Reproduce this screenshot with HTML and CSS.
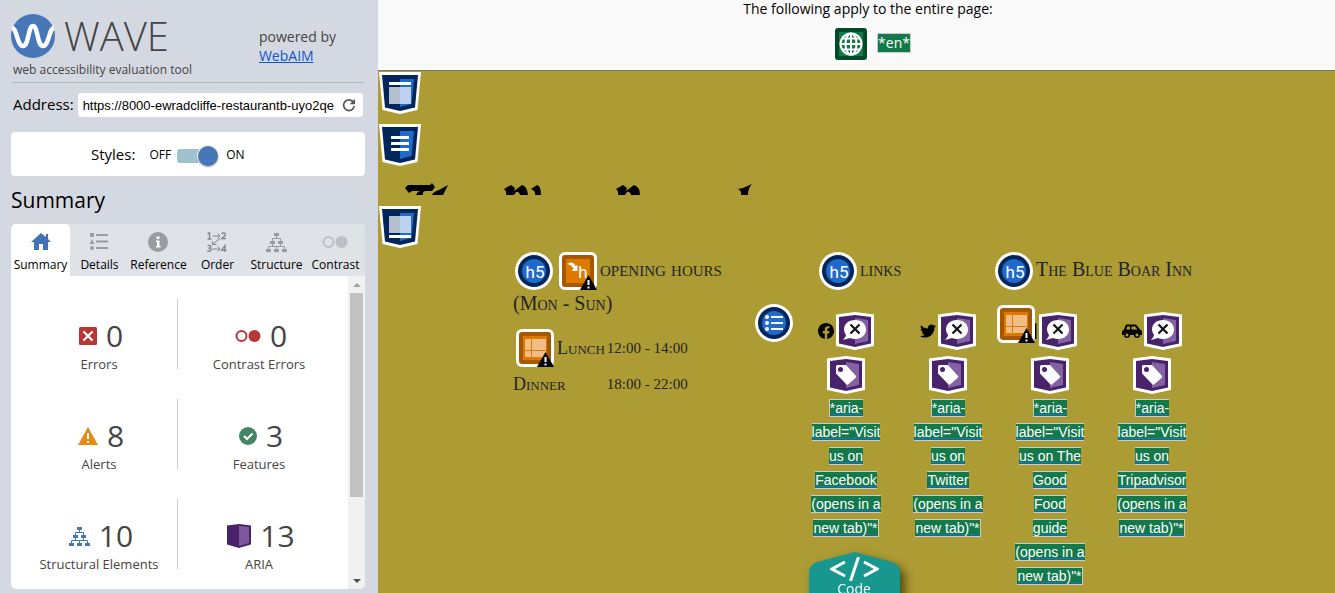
FILE: index.html
```html
<!DOCTYPE html>
<html lang="en">
<head>
<meta charset="utf-8">
<title>WAVE Report</title>
<link rel="stylesheet" href="styles.css">
</head>
<body>
<svg class="defs" aria-hidden="true">
  <symbol id="tree" viewBox="0 0 21 19">
    <path d="M8 0h5v3h-5zM4 8h5v3H4zM12 8h5v3h-5zM0 16h5v3H0zM8 16h5v3H8zM16 16h5v3h-5z"/>
    <path d="M10.500 3v3M6.500 8V5.500h8V8M6.500 11v2.500M14.500 11v2.500M2.500 16v-2.500h16V16M10.500 13.500V16" fill="none" stroke="currentColor"/>
  </symbol>
  <symbol id="shield" viewBox="0 0 42 42">
    <path fill="#fff" d="M0 0h42l-3.500 38L21 42 3.500 38z"/>
    <path fill="#00265a" d="M3 3h36l-3 32.500-15 3.500-15-3.500z"/>
    <path fill="#2269cc" d="M21 7h14l-2.500 25L21 35z"/>
  </symbol>
  <symbol id="ring" viewBox="0 0 38 38">
    <circle cx="19" cy="19" r="19" fill="#fff"/><circle cx="19" cy="19" r="16" fill="#00265a"/><circle cx="19" cy="19" r="12" fill="#2269cc"/>
  </symbol>
  <symbol id="amber" viewBox="0 0 38 38">
    <rect width="38" height="38" rx="6" fill="#fff"/><rect x="3" y="3" width="32" height="32" rx="3" fill="#a65800"/><path fill="#dd7800" d="M7 7h24v24H7z"/>
  </symbol>
  <symbol id="warn" viewBox="0 0 38 38">
    <path d="M29.500 23 38 38H21z" fill="#000"/><path fill="#fff" d="M28.500 28h2v5h-2zM28.500 34.500h2v2h-2z"/>
  </symbol>
  <symbol id="table" viewBox="0 0 38 38">
    <use href="#amber"/><path fill="#f0bd86" d="M9 10h6v11H9zM16 10h14v11H16zM9 22h6v6H9zM16 22h14v6H16z"/><use href="#warn"/>
  </symbol>
  <symbol id="aria" viewBox="0 0 38 38">
    <path fill="#fff" d="M0 2.500 19 0l19 2.500V34l-19 4-19-4z"/><path fill="#48236b" d="M3 5 19 3l16 2v26.500L19 35 3 31.500z"/><path fill="#8361a2" d="m19 6 13 2v21l-13 3z"/>
  </symbol>
  <symbol id="hidden" viewBox="0 0 38 38">
    <use href="#aria"/><path fill="#fff" d="M19 8c6.500 0 11 4 11 9.500S25.500 27 19 27q-3 0-5-1l-7 2q3-3 3-5-2-2.500-2-5.500C8 12 12.500 8 19 8z"/><path d="m14.500 12.500 9 9m0-9-9 9" stroke="#111" stroke-width="2.200"/>
  </symbol>
  <symbol id="label" viewBox="0 0 38 38">
    <use href="#aria"/><path fill="#fff" d="M10.500 9h8.500l10 11q.8 1-.5 2L21 28.500q-1 .8-2-.5L9 17.500v-7Q9 9 10.500 9z"/><circle cx="13.500" cy="13.500" r="2.500" fill="#48236b"/>
  </symbol>
</svg>

<aside class="sidebar">
  <header class="brand">
    <div>
      <div class="logo">
        <svg width="44" height="44" viewBox="0 0 44 44" aria-hidden="true"><circle cx="22" cy="22" r="22" fill="#4877b8"/><path d="M1 14c5 0 5 18 11 18s5-20 10-20 4 20 10 20 6-18 11-18" fill="none" stroke="#fff" stroke-width="4.500"/></svg>
        <h1>WAVE</h1>
      </div>
      <p class="tagline">web accessibility evaluation tool</p>
    </div>
    <p class="powered">powered by<br><a href="#">WebAIM</a></p>
  </header>
  <form class="address">
    <label for="url">Address:</label>
    <div class="url-box">
      <input id="url" type="text" value="https://8000-ewradcliffe-restaurantb-uyo2qe">
      <button type="button" aria-label="Reload"><svg width="14" height="14" viewBox="0 0 14 14"><path d="M11.500 4.500A5.300 5.300 0 1 0 12.200 8" fill="none" stroke="#555" stroke-width="1.700"/><path d="M13 .8v5.400H7.700z" fill="#555"/></svg></button>
    </div>
  </form>
  <div class="styles-box">
    <span class="styles-title">Styles:</span>
    <label for="styles">OFF</label><input id="styles" class="switch" type="checkbox" role="switch" checked><label for="styles">ON</label>
  </div>
  <h2>Summary</h2>
  <section class="panel">
    <nav class="tabs">
      <button class="active"><svg width="20" height="18" viewBox="0 0 20 18" fill="#4272b4"><path d="M10 0 0 9h3v8h5v-6h4v6h5V9h3l-3-3V1h-2v3z"/></svg>Summary</button>
      <button><svg width="20" height="18" viewBox="0 0 20 18" fill="#9a9c9f"><path d="M1 0h4v4H1zM3 6l2.500 5h-5zM7 1h12v2H7zM7 7.500h12v2H7zM7 14h12v2H7z"/><circle cx="3" cy="15" r="2"/></svg>Details</button>
      <button><svg width="20" height="20" viewBox="0 0 20 20"><circle cx="10" cy="10" r="10" fill="#9a9c9f"/><path fill="#fff" d="M8.500 4.500h3v2.500h-3zM8 8.500h3.500V14h1v1.500H8V14h1v-4H8z"/></svg>Reference</button>
      <button><svg width="20" height="20" viewBox="0 0 20 20" fill="none" stroke="#85878a"><path stroke-width="1.400" d="M.5 2 2.500.8V7M.5 7h4M14.500 2q1-1.500 2.500-1t1.500 2L14.800 6.500H19M.5 13.800q3-1 3.300.5T1.500 16.300q3 0 2.500 1.700t-3.700 1M18 20v-6.500l-3.500 4.700H19.500"/><path d="M5.500 4h7M10.500 1.500 13 4l-2.500 2.500M5.500 17h7M10.500 14.500 13 17l-2.500 2.500M13 6.500 6 12M5.500 9v3.500h4"/></svg>Order</button>
      <button><svg class="grey" width="21" height="19"><use href="#tree"/></svg>Structure</button>
      <button><svg width="26" height="14" viewBox="0 0 26 14"><circle cx="6.500" cy="7" r="5" fill="none" stroke="#bcc0c5" stroke-width="2"/><circle cx="19.500" cy="7" r="6" fill="#bcc0c5"/></svg>Contrast</button>
    </nav>
    <div class="results">
      <ul class="stats">
        <li><div class="count"><svg width="18" height="18" viewBox="0 0 18 18"><rect width="18" height="18" rx="1.500" fill="#b93636"/><path d="m4.500 4.500 9 9m0-9-9 9" stroke="#fff" stroke-width="2.200"/></svg>0</div>Errors</li>
        <li><div class="count"><svg width="26" height="14" viewBox="0 0 26 14"><circle cx="6.500" cy="7" r="5" fill="none" stroke="#b93636" stroke-width="2"/><circle cx="19.500" cy="7" r="6" fill="#b93636"/></svg>0</div>Contrast Errors</li>
        <li><div class="count"><svg width="20" height="18" viewBox="0 0 20 18"><path fill="#e38b16" d="m10 0 10 18H0z"/><path fill="#fff" d="M9 6h2v6H9zM9 14h2v2H9z"/></svg>8</div>Alerts</li>
        <li><div class="count"><svg width="18" height="18" viewBox="0 0 18 18"><circle cx="9" cy="9" r="9" fill="#458465"/><path d="m5 9 3 3 5.500-5.500" fill="none" stroke="#fff" stroke-width="2"/></svg>3</div>Features</li>
        <li><div class="count"><svg class="blue" width="21" height="19"><use href="#tree"/></svg>10</div>Structural Elements</li>
        <li><div class="count"><svg width="24" height="24" viewBox="0 0 24 24"><path fill="#48236b" d="m0 1.500 12-1.500 12 1.500v19L12 24 0 20.500z"/><path fill="#7c599c" d="m12 2 10 1v16l-10 3z"/></svg>13</div>ARIA</li>
      </ul>
      <div class="scrollbar" aria-hidden="true"><span class="arrow up"></span><span class="thumb"></span><span class="arrow down"></span></div>
    </div>
  </section>
</aside>

<main class="page">
  <header class="banner">
    <p>The following apply to the entire page:</p>
    <div class="lang">
      <svg width="38" height="38" viewBox="0 0 38 38"><rect width="38" height="38" rx="6" fill="#fff"/><rect x="3" y="3" width="32" height="32" rx="3" fill="#004c26"/><path fill="#14794a" d="M7 7h24v24H7z"/><g fill="none" stroke="#fff" stroke-width="2"><circle cx="19" cy="19" r="10.500"/><ellipse cx="19" cy="19" rx="5.500" ry="10.500"/><path d="M19 8.500v21M8.500 19h21M10 13.500h18M10 24.500h18"/></g></svg>
      <span class="tag">*en*</span>
    </div>
  </header>
  <div class="site">
    <svg width="42" height="42"><use href="#shield"/><path fill="#fff" d="M10 10h22v3H10z"/><path fill="#fff" fill-opacity=".7" d="M10 15h22v17H10z"/></svg>
    <svg class="body-icon" width="42" height="42"><use href="#shield"/><path fill="#fff" d="M12 12h18v3H12zM12 18h18v3H12zM12 24h18v3H12z"/></svg>
    <svg class="ink" width="348" height="12" viewBox="0 0 348 12" aria-hidden="true"><path d="m0 5 3-3h22l2-2 3 4-3 4h-6q-4 0-3 4h-7q1-3 4-4H7l-3 2zM27 12q1-3 7-5l9-5-5 10zM99 6l7-4 4 3-1 3 8-6q5 1 6 10h-8q-1-4-4-3l-2 3h-8q1-4-2-6zM126 6l6-4q4 1 4 10h-6q1-4-4-6zM211 6l7-4 4 3-1 3 8-6q6 2 6 10h-9q-1-4-4-3l-2 3h-7q1-4-2-6zM333 6l5-1 9-4q-4 4-4 11h-7q1-4-3-6z"/></svg>
    <svg class="foot-icon" width="42" height="42"><use href="#shield"/><path fill="#fff" d="M10 29h22v3H10z"/><path fill="#fff" fill-opacity=".7" d="M10 10h22v17H10z"/></svg>
    <footer class="footer">
      <section class="hours">
        <h5><svg class="ico"><use href="#ring"/><text class="glyph" x="20" y="26" text-anchor="middle">h5</text></svg><svg class="ico"><use href="#amber"/><path fill="#fff" d="M8 12q6-4 8.500 2l2-1v6h-6l2-2q-1-4-6.500-5z"/><text class="glyph" x="24" y="26" text-anchor="middle">h</text><use href="#warn"/></svg><span class="opening">opening hours</span></h5>
        <p class="days">(Mon - Sun)</p>
        <table>
          <tr><td><div class="lunch"><svg class="ico"><use href="#table"/></svg>Lunch</div></td><td class="time">12:00 - 14:00</td></tr>
          <tr><td>Dinner</td><td class="time">18:00 - 22:00</td></tr>
        </table>
      </section>
      <section class="links">
        <div class="heads">
          <h5><svg class="ico"><use href="#ring"/><text class="glyph" x="20" y="26" text-anchor="middle">h5</text></svg><span>links</span></h5>
          <h5><svg class="ico"><use href="#ring"/><text class="glyph" x="20" y="26" text-anchor="middle">h5</text></svg><span>The Blue Boar Inn</span></h5>
        </div>
        <div class="list">
          <svg class="ico" viewBox="0 0 38 38"><use href="#ring"/><path fill="#fff" d="M16 12h12v2H16zM16 18h12v2H16zM16 24h12v2H16z"/><g fill="#fff"><circle cx="12" cy="13" r="2"/><circle cx="12" cy="19" r="2"/><circle cx="12" cy="25" r="2"/></g></svg>
          <ul>
            <li><div class="pair"><svg width="16" height="16" viewBox="0 0 16 16"><path d="M16 8.050C16 3.600 12.400 0 8 0S0 3.600 0 8.050c0 4 2.900 7.350 6.750 7.950v-5.600H4.700V8.050h2.050V6.300c0-2 1.200-3.150 3-3.150.9 0 1.800.15 1.800.15v2h-1c-1 0-1.300.6-1.300 1.250v1.500h2.200l-.35 2.350H9.250V16C13.100 15.400 16 12.050 16 8.050z"/></svg><svg class="ico"><use href="#hidden"/></svg></div><svg class="ico"><use href="#label"/></svg><a href="#"><span class="tag">*aria-label="Visit us on Facebook (opens in a new tab)"*</span></a></li>
            <li><div class="pair"><svg width="16" height="16" viewBox="0 0 16 16"><path d="M5 14.500c6 0 9.300-5 9.300-9.300V4.800A7 7 0 0 0 16 3.100a7 7 0 0 1-1.900.5A3.300 3.300 0 0 0 15.500 1.800a7 7 0 0 1-2 .8 3.300 3.300 0 0 0-5.600 3A9.300 9.300 0 0 1 1.100 2.200a3.300 3.300 0 0 0 1 4.300 3 3 0 0 1-1.400-.4 3.300 3.300 0 0 0 2.600 3.200 3 3 0 0 1-1.500.1 3.300 3.300 0 0 0 3.100 2.300A6.600 6.600 0 0 1 0 13a9 9 0 0 0 5 1.500z"/></svg><svg class="ico"><use href="#hidden"/></svg></div><svg class="ico"><use href="#label"/></svg><a href="#"><span class="tag">*aria-label="Visit us on Twitter (opens in a new tab)"*</span></a></li>
            <li><div class="pair"><svg width="14" height="16" viewBox="0 0 14 16"><path d="M1 0v5q0 2 2 2v9h2V7q2 0 2-2V0H6v4H5V0H3v4H2V0zM13.500 0Q9 1 10 9h2v7h1.500z"/></svg><svg class="ico"><use href="#hidden"/></svg><svg class="ico over"><use href="#table"/></svg></div><svg class="ico"><use href="#label"/></svg><a href="#"><span class="tag">*aria-label="Visit us on The Good Food guide (opens in a new tab)"*</span></a></li>
            <li><div class="pair"><svg width="20" height="16" viewBox="0 0 20 16"><path fill-rule="evenodd" d="M5 1.500h8q1 0 1.700.8L18 6.500q2 .3 2 2.500v3h-2a3 3 0 0 1-6 0H8a3 3 0 0 1-6 0H0V9q0-2 2-2.500l1.300-3.800Q3.700 1.500 5 1.500zm.4 2L4.300 6.500H8v-3zM9.500 3.500v3h6l-2.400-3zM5 10.500a1.500 1.500 0 1 0 0 3 1.500 1.500 0 0 0 0-3zm10 0a1.500 1.500 0 1 0 0 3 1.500 1.500 0 0 0 0-3z"/></svg><svg class="ico"><use href="#hidden"/></svg></div><svg class="ico"><use href="#label"/></svg><a href="#"><span class="tag">*aria-label="Visit us on Tripadvisor (opens in a new tab)"*</span></a></li>
          </ul>
        </div>
      </section>
    </footer>
  </div>
  <button class="code"><svg class="code-shape" viewBox="0 0 91 60" preserveAspectRatio="none" aria-hidden="true"><path fill="#18978f" d="M45.500 0 83 10q8 3 8 10v40H0V20q0-7 8-10z"/></svg><svg width="49" height="24" viewBox="0 0 49 24" fill="none" stroke="#fff" stroke-width="3"><path d="M15 5 2 12l13 7M34 5l13 7-13 7M28.500 0l-8 24"/></svg><span>Code</span></button>
</main>
</body>
</html>
```

FILE: styles.css
```css
* { box-sizing: border-box; }
body {
  margin: 0;
  height: 100vh;
  display: flex;
  overflow: hidden;
  font-family: "Open Sans", sans-serif;
  color: #000;
}
h1, h2, h5, p, ul { margin: 0; padding: 0; font-weight: 400; }
ul { list-style: none; }
button { font: inherit; border: 0; background: none; padding: 0; }
svg { display: block; flex: none; }
.defs { position: absolute; width: 0; height: 0; }
.ico { width: 38px; height: 38px; }
.glyph { font: 400 17px Roboto, sans-serif; fill: #fff; }

.sidebar {
  flex: 0 0 378px;
  background: #d4d8e0;
  padding: 14px 13px 4px 11px;
  display: flex;
  flex-direction: column;
}
.brand {
  display: flex;
  justify-content: space-between;
  border-bottom: 1px solid #b4b7ba;
  height: 69px;
  color: #444;
}
.logo { display: flex; align-items: center; gap: 9px; height: 44px; }
.logo h1 { font-size: 40px; font-weight: 300; line-height: 46px; }
.tagline { font-size: 12px; line-height: 24px; padding-left: 2px; }
.powered { font-size: 14px; line-height: 19px; padding: 13px 29px 0 0; }
.powered a { color: #0b57d0; }
.address { display: flex; align-items: center; gap: 4px; margin: 10px 2px 0; font-size: 15px; line-height: 20px; }
.address label { padding-bottom: 2px; }
.url-box {
  flex: 1;
  min-width: 0;
  display: flex;
  align-items: center;
  height: 24px;
  padding: 0 7px 0 5px;
  gap: 7px;
  background: #fff;
  border-radius: 3px;
}
.url-box input {
  flex: 1;
  min-width: 0;
  border: 0;
  padding: 0;
  outline: 0;
  background: none;
  font: 13px "Liberation Sans", Arial, sans-serif;
}
.styles-box {
  display: flex;
  align-items: center;
  height: 44px;
  margin-top: 15px;
  padding-left: 80px;
  background: #fff;
  border-radius: 4px;
  font-size: 12px;
}
.styles-title { font-size: 15px; margin-right: 14px; }
.switch {
  appearance: none;
  width: 41px;
  height: 20px;
  margin: 3px 8px 0 6px;
  background: linear-gradient(#9fc1cb, #9fc1cb) center / 100% 14px no-repeat;
  border-radius: 7px;
}
.switch::before {
  content: "";
  display: block;
  width: 20px;
  height: 20px;
  margin-left: auto;
  border-radius: 50%;
  background: #4877b8;
  box-shadow: 0 1px 2px #999, 0 0 0 1px #fff;
}
h2 { font-size: 21px; line-height: 28px; margin: 10px 0; }
.panel { flex: 1; min-height: 0; display: flex; flex-direction: column; border-radius: 5px; overflow: hidden; background: #fff; }
.tabs { display: grid; grid-template-columns: repeat(6, 1fr); background: #dfe2e7; height: 52px; flex: none; }
.tabs button {
  display: grid;
  grid-template-rows: 20px 18px;
  justify-items: center;
  justify-content: center;
  align-items: center;
  align-content: start;
  gap: 4px;
  padding-top: 8px;
  font-size: 12px;
  line-height: 18px;
  white-space: nowrap;
}
.tabs .active { background: #fff; border-radius: 5px 5px 0 0; }
.grey { fill: #9a9c9f; color: #9a9c9f; }
.blue { fill: #4475b6; color: #4475b6; }
.results { flex: 1; min-height: 0; display: flex; }
.stats {
  flex: 1;
  display: grid;
  grid-template-columns: 157fr 162fr;
  grid-auto-rows: 70px;
  row-gap: 30px;
  padding: 23px 8px 0 10px;
  text-align: center;
  font-size: 13px;
  line-height: 18px;
  color: #444;
}
.stats li { padding-top: 18px; }
.stats li:nth-child(odd) { border-right: 1px solid #ccc; }
.count { display: flex; justify-content: center; align-items: center; gap: 9px; padding-left: 4px; font-size: 30px; line-height: 38px; }
.scrollbar { width: 17px; background: #f1f1f1; display: grid; grid-template-rows: 17px 1fr 17px; justify-items: center; }
.thumb { width: 13px; height: 73%; background: #c1c1c1; }
.arrow { align-self: center; border: 4px solid transparent; border-top-width: 0; border-bottom: 4px solid #a3a3a3; }
.down { border-bottom: 0; border-top: 4px solid #505050; }

.page { flex: 1; min-width: 0; position: relative; overflow: hidden; background: #ad9b33; }
.banner { background: #f9f9f9; border-bottom: 1px solid #777; height: 71px; padding-left: 23px; text-align: center; font-size: 14px; line-height: 18px; }
.lang { display: flex; align-items: center; justify-content: center; gap: 7px; margin-top: 7px; padding-left: 7px; }
.lang .tag { margin-bottom: 2px; }
.tag { background: #14794a; color: #fff; border: 1px solid #ccc; }
.site { padding: 1px 0 0 1px; }
.body-icon { margin-top: 10px; }
.ink { margin: 17px 0 0 26px; }
.foot-icon { margin-top: 11px; }
.footer {
  display: grid;
  grid-template-columns: 242px 1fr;
  padding: 4px 0 0 134px;
  font-family: "Liberation Serif", serif;
  font-variant: small-caps;
  color: #212529;
}
h5 { display: flex; align-items: center; font-size: 20px; line-height: 24px; white-space: nowrap; }
h5 span { padding-bottom: 4px; }
.hours h5 { padding-left: 2px; gap: 6px; }
.opening { font-size: 21px; margin-left: -3px; }
.days { font-size: 20px; line-height: 24px; margin-top: 1px; }
.hours table { margin-top: 14px; border-spacing: 0; font-size: 18px; line-height: 24px; }
.hours td { padding: 0 2px 0 0; height: 34px; white-space: nowrap; }
.hours .time { font-size: 15px; }
.lunch { display: flex; align-items: center; gap: 3px; padding-left: 3px; }
.heads { display: flex; padding-left: 64px; }
.links h5 { gap: 3px; flex: 0 0 176px; }
.list { display: flex; align-items: flex-start; gap: 2px; margin-top: 14px; }
.list ul { display: flex; margin-top: 8px; }
.list li {
  width: 102px;
  padding: 0 16px;
  display: flex;
  flex-direction: column;
  align-items: center;
  text-align: center;
  font: 14px/24px "Liberation Sans", Arial, sans-serif;
}
.pair { position: relative; display: flex; align-items: center; gap: 2px; margin-bottom: 6px; }
.pair .over { position: absolute; right: 42px; top: -7px; }
.pair svg { fill: #000; }
.list a { color: #0d6efd; margin-top: 2px; }
.code {
  position: absolute;
  left: 45%;
  bottom: -19px;
  width: 91px;
  height: 60px;
  display: flex;
  flex-direction: column;
  align-items: center;
  padding-top: 5px;
  color: #fff;
  font-size: 14px;
  line-height: 16px;
  filter: drop-shadow(5px 5px 5px #554a14);
}
.code-shape { position: absolute; inset: 0; width: 100%; height: 100%; z-index: -1; }
```
